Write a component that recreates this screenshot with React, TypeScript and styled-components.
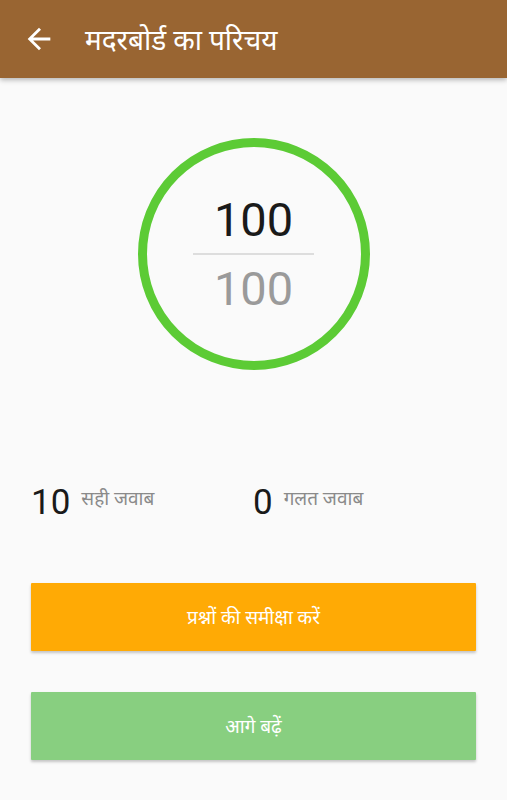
import React from 'react'
import styled, { createGlobalStyle } from 'styled-components'

const GlobalStyle = createGlobalStyle`
    html, body {
        margin: 0;
        padding: 0;
        background: #fafafa;
        font-family: Roboto, "Noto Sans", "Noto Sans Devanagari", sans-serif;
    }
`

const Page = styled.div`
    width: 507px;
    min-height: 800px;
    background: #fafafa;
    overflow: hidden;
`

const Toolbar = styled.header`
    height: 78px;
    background: #996532;
    display: flex;
    align-items: center;
    padding: 0 0 0 22px;
    box-shadow: 0 2px 5px rgba(0, 0, 0, 0.28);
    position: relative;
`

const BackButton = styled.button`
    width: 34px;
    height: 34px;
    padding: 0;
    border: 0;
    background: none;
    display: flex;
    align-items: center;
    justify-content: center;
    margin-right: 29px;
`

const Title = styled.h1`
    margin: 0;
    color: #ffffff;
    font-size: 28px;
    font-weight: 400;
`

const ScoreArea = styled.div`
    display: flex;
    justify-content: center;
    padding-top: 60px;
`

const Ring = styled.div`
    width: 214px;
    height: 214px;
    border: 9px solid #5ccb35;
    border-radius: 50%;
    display: flex;
    flex-direction: column;
    align-items: center;
    justify-content: center;
`

const ScoreNumber = styled.div<{ muted?: boolean }>`
    font-size: 47px;
    line-height: 50px;
    color: ${({ muted }) => (muted ? '#9a9a9a' : '#1a1a1a')};
`

const Divider = styled.div`
    width: 121px;
    height: 2px;
    background: #dddddd;
    margin: 8px 0 9px;
`

const StatsRow = styled.div`
    display: flex;
    padding: 113px 0 0 31px;
`

const Stat = styled.div`
    display: flex;
    align-items: flex-start;
    width: 222px;
`

const StatValue = styled.span`
    font-size: 35px;
    line-height: 40px;
    color: #1a1a1a;
    margin-right: 11px;
`

const StatLabel = styled.span`
    font-size: 19px;
    line-height: 24px;
    color: #8a8a8a;
    padding-top: 4px;
`

const Actions = styled.div`
    display: flex;
    flex-direction: column;
    gap: 41px;
    padding: 60px 31px 0;
`

const ActionButton = styled.button<{ color: string }>`
    height: 68px;
    border: 0;
    border-radius: 1px;
    background: ${({ color }) => color};
    color: #ffffff;
    font-family: inherit;
    font-size: 19px;
    box-shadow: 0 2px 3px rgba(0, 0, 0, 0.22);
`

export default function App() {
    return (
        <Page>
            <GlobalStyle />
            <Toolbar>
                <BackButton aria-label="back">
                    <svg width="34" height="34" viewBox="0 0 24 24">
                        <path d="M20 11H7.83l5.59-5.59L12 4l-8 8 8 8 1.41-1.41L7.83 13H20v-2z" fill="#ffffff" />
                    </svg>
                </BackButton>
                <Title>मदरबोर्ड का परिचय</Title>
            </Toolbar>
            <ScoreArea>
                <Ring>
                    <ScoreNumber>100</ScoreNumber>
                    <Divider />
                    <ScoreNumber muted>100</ScoreNumber>
                </Ring>
            </ScoreArea>
            <StatsRow>
                <Stat>
                    <StatValue>10</StatValue>
                    <StatLabel>सही जवाब</StatLabel>
                </Stat>
                <Stat>
                    <StatValue>0</StatValue>
                    <StatLabel>गलत जवाब</StatLabel>
                </Stat>
            </StatsRow>
            <Actions>
                <ActionButton color="#ffaa05">प्रश्नों की समीक्षा करें</ActionButton>
                <ActionButton color="#88cf80">आगे बढ़ें</ActionButton>
            </Actions>
        </Page>
    )
}
